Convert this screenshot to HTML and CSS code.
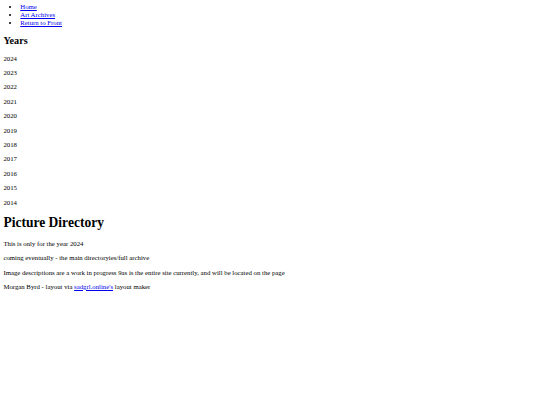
FILE: index.html
```html
<!DOCTYPE html>
<html>
<head>
<meta charset="utf-8">
<title>Picture Directory</title>
<link rel="stylesheet" href="styles.css">
</head>
<body class="page">
<ul class="nav">
<li><a href="#">Home</a></li>
<li><a href="#">Art Archives</a></li>
<li><a href="#">Return to Front</a></li>
</ul>
<h2 class="sub">Years</h2>
<p class="para">2024</p>
<p class="para">2023</p>
<p class="para">2022</p>
<p class="para">2021</p>
<p class="para">2020</p>
<p class="para">2019</p>
<p class="para">2018</p>
<p class="para">2017</p>
<p class="para">2016</p>
<p class="para">2015</p>
<p class="para">2014</p>
<h1 class="title">Picture Directory</h1>
<p class="para">This is only for the year 2024</p>
<p class="para">coming eventually - the main directoryies/full archive</p>
<p class="para">Image descriptions are a work in progress 9as is the entire site currently, and will be located on the page</p>
<p class="para">Morgan Byrd - layout via <a href="#">sadgrl.online's</a> layout maker</p>
</body>
</html>
```
FILE: styles.css
```css
html { background: #fff; }
.page {
  margin: 3.38px;
  font-family: "Liberation Serif", "Times New Roman", serif;
  font-size: 6.77px;
  line-height: 1.13;
  color: #000;
}
.page a { color: #0000ee; text-decoration: underline; }
.nav {
  margin: 0;
  padding-left: 16.9px;
  list-style: disc;
}
.sub {
  font-size: 1.5em;
  font-weight: bold;
  margin: 0.83em 0;
}
.title {
  font-size: 2em;
  font-weight: bold;
  margin: 0.67em 0;
}
.para { margin: 1em 0; }
```
